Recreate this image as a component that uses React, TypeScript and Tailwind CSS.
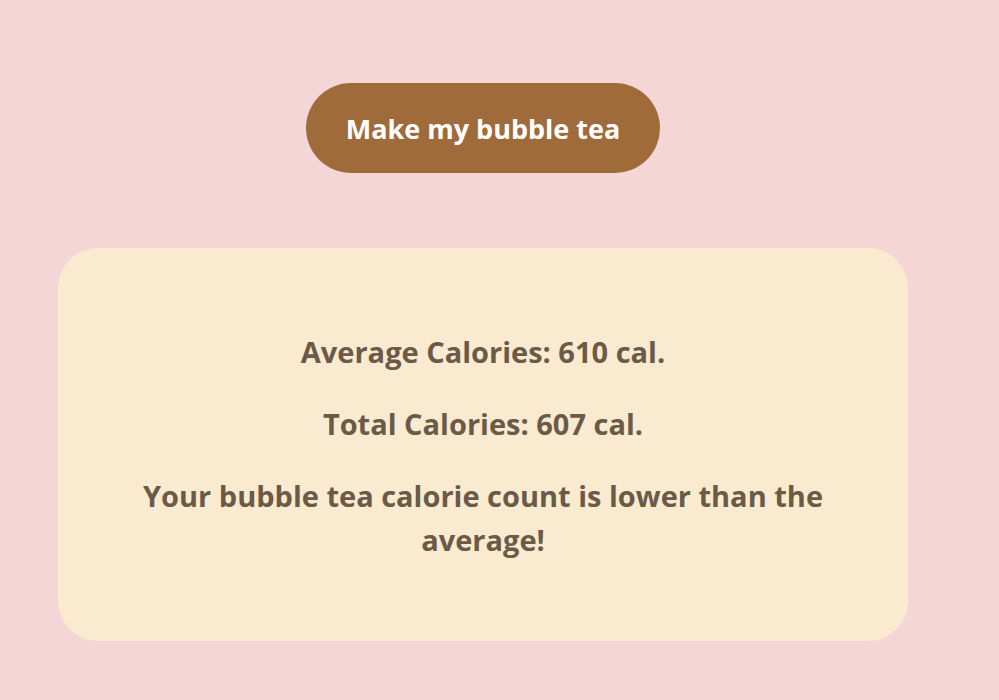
export default function App() {
  return (
    <div className="min-h-[700px] w-full bg-[#f5d6d6] font-['Open_Sans',sans-serif]">
      <div className="flex w-[966px] flex-col items-center pt-[83px]">
        <button className="h-[90px] w-[354px] rounded-full bg-[#a06b3b] pt-[2px] text-[27px] font-bold text-white">
          Make my bubble tea
        </button>
        <div className="mt-[75px] flex h-[393px] w-[850px] flex-col items-center justify-center rounded-[40px] bg-[#faebd0] px-[60px] pt-[2px] text-center text-[29px] leading-[44px] font-bold text-[#6b5a48]">
          <p>Average Calories: 610 cal.</p>
          <p className="mt-[28px]">Total Calories: 607 cal.</p>
          <p className="mt-[28px]">Your bubble tea calorie count is lower than the average!</p>
        </div>
      </div>
    </div>
  );
}
